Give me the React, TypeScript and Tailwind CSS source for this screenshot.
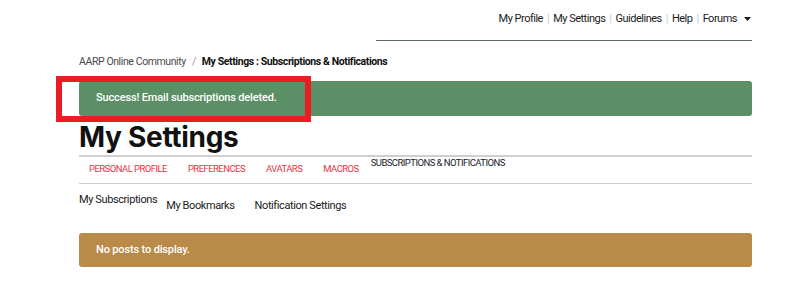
const navLinks = ["My Profile", "My Settings", "Guidelines", "Help"];
const tabs = ["PERSONAL PROFILE", "PREFERENCES", "AVATARS", "MACROS"];

export default function App() {
  return (
    <div className="relative w-[792px] h-[295px] bg-white font-['Roboto',sans-serif] text-[#111]">
      <div className="ml-[79px] w-[673px]">
        {/* top nav */}
        <div className="flex justify-end">
          <div className="w-[376px] h-[41px] border-b border-[#5f6970] flex items-start justify-end pt-[11px] text-[11px] tracking-[-0.5px] text-[#1a1a1a]">
            {navLinks.map((l) => (
              <span key={l} className="flex items-center">
                <span>{l}</span>
                <span className="mx-[4px] text-[#c8c8c8]">|</span>
              </span>
            ))}
            <span className="flex items-center">
              Forums
              <svg width="7" height="4" viewBox="0 0 7 4" className="ml-[7px] mr-[1px]">
                <path d="M0 0h7L3.5 4z" fill="#1a1a1a" />
              </svg>
            </span>
          </div>
        </div>

        {/* breadcrumb */}
        <div className="mt-[13px] text-[10.5px] tracking-[-0.4px] flex items-center">
          <span className="text-[#4a4a4a]">AARP Online Community</span>
          <span className="mx-[6px] text-[#999]">/</span>
          <span className="font-bold text-[#111]">My Settings : Subscriptions &amp; Notifications</span>
        </div>

        {/* success banner */}
        <div className="mt-[11px] h-[35px] rounded-[3px] bg-[#5b9066] flex items-center pl-[17px] text-[11px] tracking-[-0.15px] font-medium text-white">
          Success! Email subscriptions deleted.
        </div>

        <h1 className="mt-[3px] text-[28px] leading-[36px] font-bold font-['Inter',sans-serif] tracking-[-0.3px] text-[#111]">
          My Settings
        </h1>

        {/* tabs */}
        <div className="border-t-2 border-b border-[#cfcfcf] h-[29px] flex items-start pl-[10px] text-[9.5px] leading-[10px] tracking-[-0.55px]">
          {tabs.map((t) => (
            <span key={t} className="mt-[7px] mr-[21px] text-[#e8343e]">
              {t}
            </span>
          ))}
          <span className="mt-[1px] -ml-[9px] text-[#1a1a2a]">SUBSCRIPTIONS &amp; NOTIFICATIONS</span>
        </div>

        {/* sub tabs */}
        <div className="flex items-start text-[11px] tracking-[-0.4px] text-[#1a1a1a] h-[49px]">
          <span className="mt-[8px]">My Subscriptions</span>
          <span className="mt-[14px] ml-[9px]">My Bookmarks</span>
          <span className="mt-[14px] ml-[20px]">Notification Settings</span>
        </div>

        {/* empty notice */}
        <div className="h-[34px] rounded-[3px] bg-[#b98a48] flex items-center pl-[17px] text-[11px] tracking-[-0.15px] font-medium text-white">
          No posts to display.
        </div>
      </div>

      {/* annotation box */}
      <div className="absolute left-[56px] top-[76px] w-[255px] h-[46px] border-[6px] border-[#ec1c24]" />
    </div>
  );
}
